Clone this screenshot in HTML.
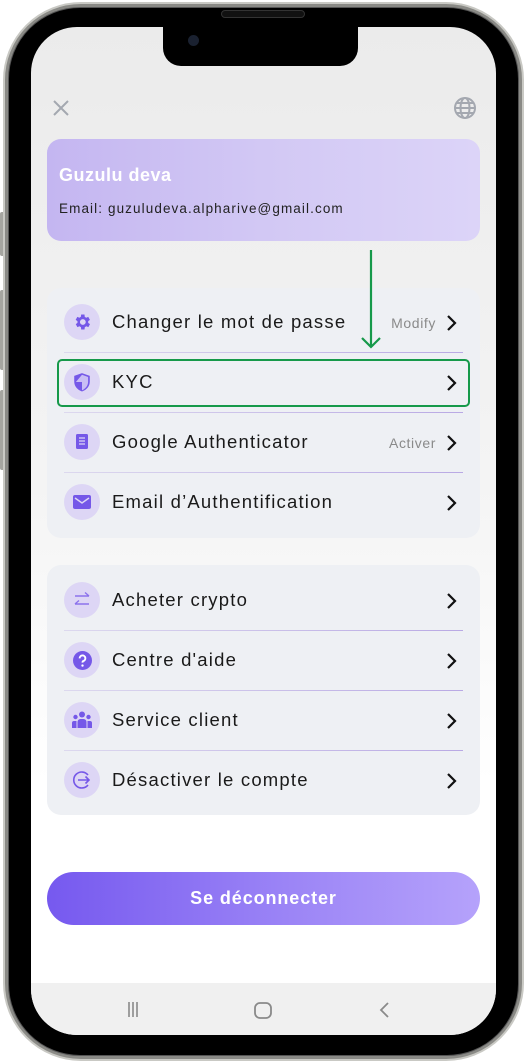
<!DOCTYPE html>
<html><head><meta charset="utf-8"><style>
*{box-sizing:border-box;margin:0;padding:0}
body{width:527px;height:1063px;background:#fff;position:relative;overflow:hidden;font-family:"Liberation Sans",sans-serif}
.frame{position:absolute;left:3px;top:2px;width:521px;height:1059px;border-radius:78px;background:#8a8a86;border:2px solid #c9c9c4}
.frame2{position:absolute;left:8px;top:7px;width:511px;height:1049px;border-radius:72px;background:#000;border:1px solid #555}
.screen{position:absolute;left:31px;top:27px;width:465px;height:1008px;border-radius:46px;overflow:hidden;background:linear-gradient(#ebebeb 0%,#f4f4f4 45%,#fff 75%)}
.notch{position:absolute;left:132px;top:0;width:195px;height:39px;background:#000;border-radius:0 0 18px 18px}
.cam{position:absolute;width:11px;height:11px;border-radius:50%;background:#1a2130}
.spk{position:absolute;left:221px;top:10px;width:84px;height:8px;border-radius:4px;background:#111;border:1px solid #333}
.btn-side{position:absolute;left:0;width:5px;background:#a5a5a0;border-radius:2px}
.card{position:absolute;left:47px;width:433px;border-radius:14px}
.profile{top:139px;height:102px;background:linear-gradient(90deg,#c4b6f1,#d2c8f4 50%,#dcd4f8)}
.name{position:absolute;left:12px;top:26px;color:#fff;font-size:18px;font-weight:bold;letter-spacing:0.5px}
.email{position:absolute;left:12px;top:62px;color:#222;font-size:13.5px;letter-spacing:1.1px}
.list{background:#eef0f4;height:250px}
.row{position:absolute;left:0;width:433px;height:60px}
.ic{position:absolute;left:17px;top:12px;width:36px;height:36px;border-radius:50%;background:#ddd6f5;display:flex;align-items:center;justify-content:center}
.lbl{position:absolute;left:65px;top:19px;font-size:18.5px;color:#1a1a1a;letter-spacing:1.2px}
.chev{position:absolute;left:398px;top:22px}
.side{position:absolute;right:44px;top:23px;font-size:14px;color:#8a8a8a;letter-spacing:0.6px}
.div{position:absolute;left:17px;width:399px;height:1px;background:linear-gradient(90deg,#dcd8ee,#b9a9e4)}
.logout{position:absolute;left:47px;top:872px;width:433px;height:53px;border-radius:27px;background:linear-gradient(90deg,#7659ef,#9b84f6 55%,#b5a2fb);color:#fff;font-size:18px;font-weight:bold;text-align:center;line-height:53px;letter-spacing:0.9px}
.nav{position:absolute;left:31px;top:983px;width:465px;height:52px;background:#f0f0f0}
</style></head><body>
<div class="btn-side" style="top:212px;height:44px"></div>
<div class="btn-side" style="top:290px;height:80px"></div>
<div class="btn-side" style="top:390px;height:80px"></div>
<div class="frame"></div>
<div class="frame2"></div>
<div class="screen">
<div class="notch"></div>
</div>
<div class="spk"></div>
<div class="cam" style="left:188px;top:35px"></div>
<svg style="position:absolute;left:52px;top:99px" width="18" height="18" viewBox="0 0 18 18"><path d="M2 2L16 16M16 2L2 16" stroke="#a4a8b0" stroke-width="2"/></svg>
<svg style="position:absolute;left:453px;top:96px" width="24" height="24" viewBox="0 0 24 24" fill="none" stroke="#a4a8b0" stroke-width="2"><circle cx="12" cy="12" r="10"/><ellipse cx="12" cy="12" rx="4.5" ry="10"/><path d="M2 12h20M4 7h16M4 17h16"/></svg>
<div class="card profile"><div class="name">Guzulu deva</div><div class="email">Email: guzuludeva.alpharive@gmail.com</div></div>

<div class="card list" style="top:288px">
 <div class="row" style="top:4px"><div class="ic"><svg width="20" height="20" viewBox="0 0 24 24"><path fill="#7558e8" d="M19.4 13a7.5 7.5 0 0 0 0-2l2.1-1.6-2-3.5-2.5 1a7 7 0 0 0-1.7-1L15 3h-4l-.4 2.9a7 7 0 0 0-1.7 1l-2.5-1-2 3.5L6.6 11a7.5 7.5 0 0 0 0 2l-2.1 1.6 2 3.5 2.5-1a7 7 0 0 0 1.7 1L11 21h4l.4-2.9a7 7 0 0 0 1.7-1l2.5 1 2-3.5zM13 15.5a3.5 3.5 0 1 1 0-7 3.5 3.5 0 0 1 0 7z"/></svg></div><div class="lbl">Changer le mot de passe</div><div class="side">Modify</div><svg class="chev" width="12" height="18" viewBox="0 0 12 18"><path d="M3 2l7 7-7 7" stroke="#111" stroke-width="2.2" fill="none"/></svg></div>
 <div class="div" style="top:64px"></div>
 <div class="row" style="top:64px"><div class="ic"><svg width="18" height="20" viewBox="0 0 16 18"><path d="M8 1L1 3.5v5C1 13 4 16 8 17.5c4-1.5 7-4.5 7-9v-5z" fill="#7558e8"/><path d="M8 2.5v14C11 15 13.5 12.5 13.5 8.5V4.5zM2.5 9h5.5V2.5" fill="#c9bdf5"/></svg></div><div class="lbl">KYC</div><svg class="chev" width="12" height="18" viewBox="0 0 12 18"><path d="M3 2l7 7-7 7" stroke="#111" stroke-width="2.2" fill="none"/></svg></div>
 <div class="div" style="top:124px"></div>
 <div class="row" style="top:124px"><div class="ic"><svg width="16" height="18" viewBox="0 0 16 18"><rect x="2" y="1" width="12" height="15" rx="1.5" fill="#7558e8"/><path d="M5 5h6M5 8h6M5 11h6" stroke="#ddd6f5" stroke-width="1.3"/></svg></div><div class="lbl">Google Authenticator</div><div class="side">Activer</div><svg class="chev" width="12" height="18" viewBox="0 0 12 18"><path d="M3 2l7 7-7 7" stroke="#111" stroke-width="2.2" fill="none"/></svg></div>
 <div class="div" style="top:184px"></div>
 <div class="row" style="top:184px"><div class="ic"><svg width="18" height="14" viewBox="0 0 18 14"><rect x="0" y="0" width="18" height="14" rx="2" fill="#7558e8"/><path d="M2 3l7 5 7-5" stroke="#ddd6f5" stroke-width="1.5" fill="none"/></svg></div><div class="lbl">Email d’Authentification</div><svg class="chev" width="12" height="18" viewBox="0 0 12 18"><path d="M3 2l7 7-7 7" stroke="#111" stroke-width="2.2" fill="none"/></svg></div>
</div>

<div style="position:absolute;left:57px;top:359px;width:413px;height:48px;border:2.5px solid #16994a;border-radius:5px"></div>
<svg style="position:absolute;left:359px;top:250px" width="24" height="100" viewBox="0 0 24 100"><path d="M12 0v97M3 88l9 9 9-9" stroke="#16994a" stroke-width="2.2" fill="none"/></svg>

<div class="card list" style="top:565px">
 <div class="row" style="top:5px"><div class="ic"><svg width="20" height="18" viewBox="0 0 20 18" fill="none" stroke="#8c72ec" stroke-width="1.4"><path d="M3 5h14M13 1.5L17 5M17 13H3M7 9.5L3 13"/></svg></div><div class="lbl">Acheter crypto</div><svg class="chev" width="12" height="18" viewBox="0 0 12 18"><path d="M3 2l7 7-7 7" stroke="#111" stroke-width="2.2" fill="none"/></svg></div>
 <div class="div" style="top:65px"></div>
 <div class="row" style="top:65px"><div class="ic"><svg width="19" height="19" viewBox="0 0 18 18"><circle cx="9" cy="9" r="9" fill="#7558e8"/><path d="M6.3 7a2.7 2.7 0 1 1 3.5 2.5c-.6.3-.8.7-.8 1.5" stroke="#fff" stroke-width="1.8" fill="none"/><circle cx="9" cy="13.8" r="1.1" fill="#fff"/></svg></div><div class="lbl">Centre d'aide</div><svg class="chev" width="12" height="18" viewBox="0 0 12 18"><path d="M3 2l7 7-7 7" stroke="#111" stroke-width="2.2" fill="none"/></svg></div>
 <div class="div" style="top:125px"></div>
 <div class="row" style="top:125px"><div class="ic"><svg width="22" height="18" viewBox="0 0 22 18" fill="#7558e8"><circle cx="11" cy="3.5" r="3"/><circle cx="4.5" cy="6" r="2.2"/><circle cx="17.5" cy="6" r="2.2"/><path d="M6.5 17V11a3 3 0 0 1 3-3h3a3 3 0 0 1 3 3v6zM1 17v-5a2 2 0 0 1 2-2h2.5v7zM21 17v-5a2 2 0 0 0-2-2h-2.5v7z"/></svg></div><div class="lbl">Service client</div><svg class="chev" width="12" height="18" viewBox="0 0 12 18"><path d="M3 2l7 7-7 7" stroke="#111" stroke-width="2.2" fill="none"/></svg></div>
 <div class="div" style="top:185px"></div>
 <div class="row" style="top:185px"><div class="ic"><svg width="22" height="22" viewBox="0 0 22 22" fill="none" stroke="#7558e8" stroke-width="1.6"><path d="M17 6a8 8 0 1 0 0 10"/><path d="M7 11h11M14.5 7.5L18 11l-3.5 3.5"/></svg></div><div class="lbl">Désactiver le compte</div><svg class="chev" width="12" height="18" viewBox="0 0 12 18"><path d="M3 2l7 7-7 7" stroke="#111" stroke-width="2.2" fill="none"/></svg></div>
</div>

<div class="logout">Se déconnecter</div>
<div class="nav" style="border-radius:0 0 46px 46px"></div>
<svg style="position:absolute;left:125px;top:1000px" width="20" height="20" viewBox="0 0 20 20"><path d="M8 2v15M12 2v15M16 2v15" stroke="#8a8a8a" stroke-width="1.6" transform="translate(-4 0)"/></svg>
<svg style="position:absolute;left:252px;top:1000px" width="22" height="22" viewBox="0 0 22 22"><rect x="3" y="3" width="16" height="15" rx="5" stroke="#8a8a8a" stroke-width="1.8" fill="none"/></svg>
<svg style="position:absolute;left:376px;top:1000px" width="16" height="20" viewBox="0 0 16 20"><path d="M12 3L5 10l7 7" stroke="#8a8a8a" stroke-width="1.8" fill="none"/></svg>
</body></html>
